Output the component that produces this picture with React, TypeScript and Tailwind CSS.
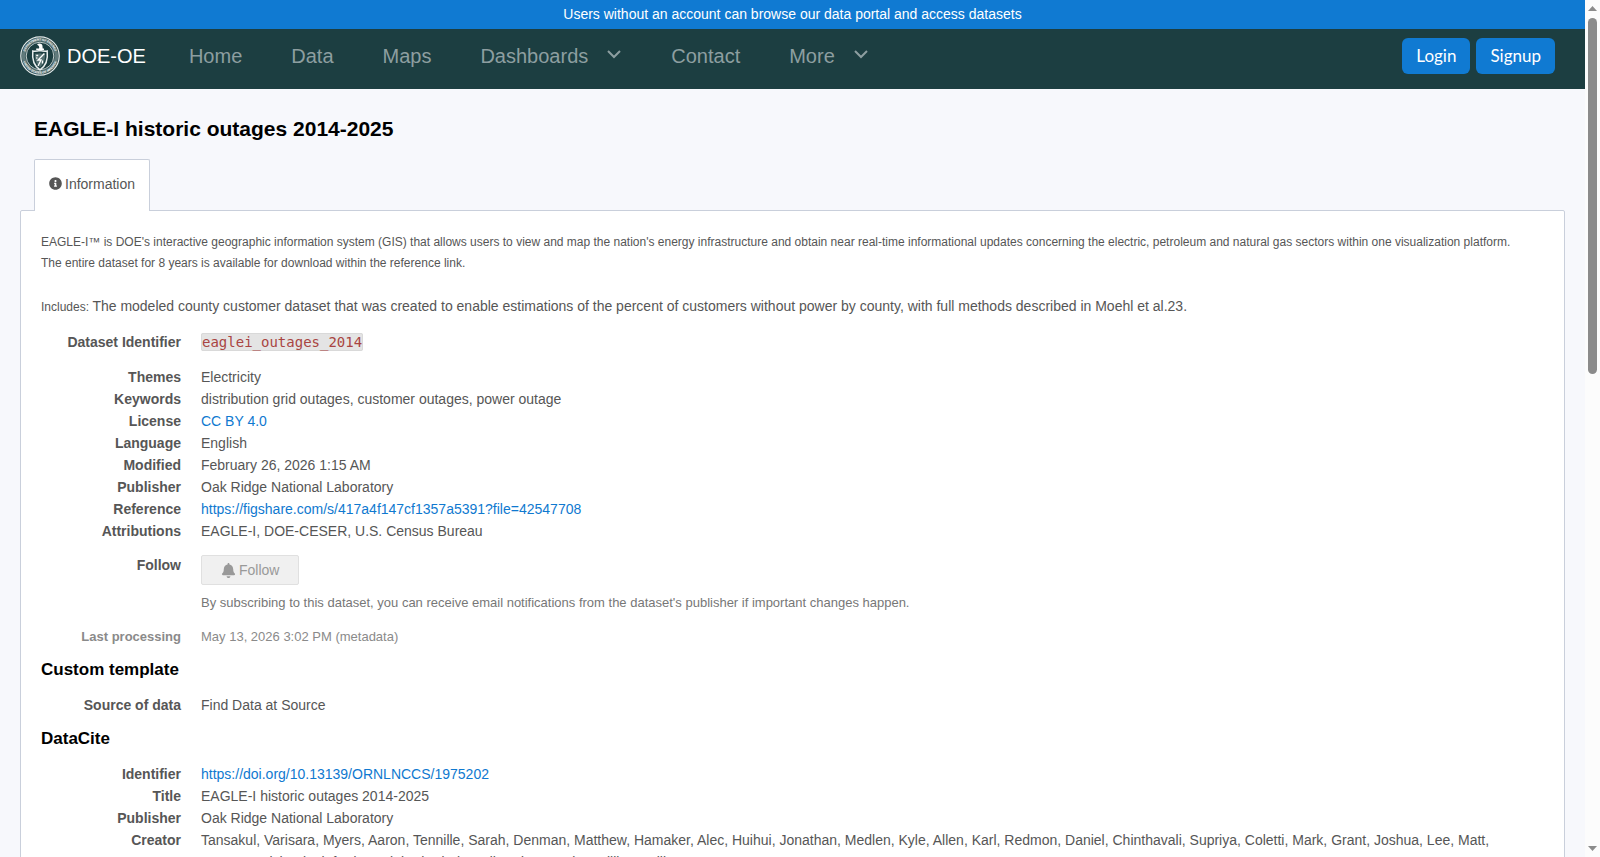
import type { ReactNode } from "react";
import { FaBell, FaInfoCircle } from "react-icons/fa";

type Row = { label: string; value: ReactNode };

const linkClass = "text-[#0f79d0] hover:underline";

const navItems = [
  { label: "Home", href: "/", menu: false },
  { label: "Data", href: "/explore", menu: false },
  { label: "Maps", href: "/maps", menu: false },
  { label: "Dashboards", href: "/dashboards", menu: true },
  { label: "Contact", href: "/contact", menu: false },
  { label: "More", href: "/more", menu: true },
];

const metadata: Row[] = [
  { label: "Themes", value: "Electricity" },
  { label: "Keywords", value: "distribution grid outages, customer outages, power outage" },
  {
    label: "License",
    value: <a className={linkClass} href="https://creativecommons.org/licenses/by/4.0/">CC BY 4.0</a>,
  },
  { label: "Language", value: "English" },
  { label: "Modified", value: "February 26, 2026 1:15 AM" },
  { label: "Publisher", value: "Oak Ridge National Laboratory" },
  {
    label: "Reference",
    value: (
      <a className={linkClass} href="https://figshare.com/s/417a4f147cf1357a5391?file=42547708">
        https://figshare.com/s/417a4f147cf1357a5391?file=42547708
      </a>
    ),
  },
  { label: "Attributions", value: "EAGLE-I, DOE-CESER, U.S. Census Bureau" },
];

const dataCite: Row[] = [
  {
    label: "Identifier",
    value: (
      <a className={linkClass} href="https://doi.org/10.13139/ORNLNCCS/1975202">
        https://doi.org/10.13139/ORNLNCCS/1975202
      </a>
    ),
  },
  { label: "Title", value: "EAGLE-I historic outages 2014-2025" },
  { label: "Publisher", value: "Oak Ridge National Laboratory" },
  {
    label: "Creator",
    value:
      "Tansakul, Varisara, Myers, Aaron, Tennille, Sarah, Denman, Matthew, Hamaker, Alec, Huihui, Jonathan, Medlen, Kyle, Allen, Karl, Redmon, Daniel, Chinthavali, Supriya, Coletti, Mark, Grant, Joshua, Lee, Matt, Maness, Michael, Lipford, Daniel, Bhaduri, Budhendra, Newby, William, Hill",
  },
];

function Seal() {
  return (
    <svg width="40" height="40" viewBox="0 0 40 40" fill="none" aria-hidden="true">
      <defs>
        <path id="seal-top" d="M4.6 20a15.4 15.4 0 0 1 30.8 0" />
        <path id="seal-bottom" d="M2.4 20a17.6 17.6 0 0 0 35.2 0" />
      </defs>
      <circle cx="20" cy="20" r="19.2" stroke="#e3e9e9" strokeWidth="1.2" />
      <circle cx="20" cy="20" r="16.4" stroke="#8fa3a4" strokeWidth="3.6" strokeOpacity=".6" />
      <circle cx="20" cy="20" r="13.8" stroke="#d5dddd" strokeWidth=".9" />
      <g fill="#fff" fontSize="3" fontWeight="700" fontFamily="Liberation Sans, sans-serif">
        <text>
          <textPath href="#seal-top" startOffset="50%" textAnchor="middle">DEPARTMENT OF ENERGY</textPath>
        </text>
        <text>
          <textPath href="#seal-bottom" startOffset="50%" textAnchor="middle">UNITED STATES OF AMERICA</textPath>
        </text>
      </g>
      {/* eagle crest */}
      <path d="M17 8.6c1.6-1.9 5.2-1.3 5.400 1l.3 3h1.300v1.400h-7.800v-1.400h2.800c.6-1.400.2-2.400-2-4z" fill="#fff" />
      {/* shield */}
      <path
        d="M12.800 15c2.600.5 4.800.1 7.200-.5 2.400.6 4.600 1 7.200.5.8 7.200-.6 14.600-7.200 18.800-6.600-4.200-8-11.600-7.200-18.800z"
        stroke="#e8eeee"
        strokeWidth="1.500"
      />
      <path d="M15 17.800c1.800.2 3.500-.1 5-.5 1.500.4 3.200.7 5 .5.3 5.200-.9 10.200-5 13.400-4.100-3.200-5.300-8.200-5-13.400z" fill="#8ea3a3" fillOpacity=".5" />
      <path d="m24.400 17.500-6.400 6.500h3l-3 6M16.200 19.500h2M16.200 22h1.200M22.500 24.500v3" stroke="#fff" strokeWidth="1.300" />
    </svg>
  );
}

function Chevron() {
  return (
    <svg className="ml-[18px]" width="16" height="16" viewBox="0 0 16 16" fill="none" stroke="currentColor" strokeWidth="2" aria-hidden="true">
      <path d="m2 3 6 6 6-6" />
    </svg>
  );
}

function DefinitionList({ rows }: { rows: Row[] }) {
  return (
    <dl className="mt-[13px] grid grid-cols-[140px_1fr] gap-x-5 leading-[22px]">
      {rows.map((row) => (
        <div key={row.label} className="contents">
          <dt className="text-right font-bold">{row.label}</dt>
          <dd>{row.value}</dd>
        </div>
      ))}
    </dl>
  );
}

function ScrollRail() {
  return (
    <div className="flex w-[15px] shrink-0 flex-col items-center justify-between bg-[#fcfcfc] py-1.5" aria-hidden="true">
      <div className="flex min-h-0 grow flex-col items-center gap-[7px]">
        <svg width="9" height="5" viewBox="0 0 9 5" fill="#8b8b8b">
          <path d="M4.5 0 9 5H0z" />
        </svg>
        <div className="h-[42.4%] w-[9px] rounded-full bg-[#8b8b8b]" />
      </div>
      <svg width="9" height="5" viewBox="0 0 9 5" fill="#8b8b8b">
        <path d="M4.5 5 9 0H0z" />
      </svg>
    </div>
  );
}

export default function App() {
  return (
    <div className="flex h-screen overflow-hidden bg-[#f7f8fc] font-['Liberation_Sans',Arial,sans-serif] text-sm text-[#565656]">
      <div className="min-w-0 grow overflow-hidden">
        <div className="bg-[#107ad2] text-center leading-[29px] text-white">
          Users without an account can browse our data portal and access datasets
        </div>

        <header className="flex h-[60px] items-center bg-[#1c3e41] pb-1.5 pl-5 pr-[30px]">
          <a href="/" className="flex items-center gap-[7px] text-xl text-white">
            <Seal />
            DOE-OE
          </a>
          <nav className="ml-[43px] flex grow items-center gap-[49px] text-xl text-[#8d9ea0]">
            {navItems.map((item) =>
              item.menu ? (
                <button key={item.label} type="button" className="flex items-center">
                  {item.label}
                  <Chevron />
                </button>
              ) : (
                <a key={item.label} href={item.href}>{item.label}</a>
              ),
            )}
          </nav>
          <div className="flex gap-1.5 font-['Lato',sans-serif] text-[17px] text-white">
            <a href="/login" className="flex h-9 items-center rounded-md bg-[#107ad2] px-3.5">Login</a>
            <a href="/signup" className="flex h-9 items-center rounded-md bg-[#107ad2] px-3.5">Signup</a>
          </div>
        </header>

        <main className="px-5 pt-6">
          <h1 className="px-3.5 text-[21px] font-bold leading-8 text-black">EAGLE-I historic outages 2014-2025</h1>

          <div role="tablist" className="mt-3.5 px-3.5">
            <button
              type="button"
              role="tab"
              aria-selected="true"
              className="relative z-10 -mb-px flex h-[52px] items-center gap-[3px] rounded-t-xs border border-b-0 border-[#c9cfdb] bg-white px-3.5 pb-1"
            >
              <FaInfoCircle size={13} />
              Information
            </button>
          </div>

          <section className="rounded-xs border border-[#c9cfdb] bg-white px-5 pb-10 pt-[21px]">
            <p className="text-xs leading-[21px]">
              EAGLE-I™ is DOE's interactive geographic information system (GIS) that allows users to view and map the
              nation's energy infrastructure and obtain near real-time informational updates concerning the electric,
              petroleum and natural gas sectors within one visualization platform.
              <br />
              The entire dataset for 8 years is available for download within the reference link.
            </p>
            <p className="mt-[21px] leading-[22px]">
              <span className="text-xs">Includes: </span>
              The modeled county customer dataset that was created to enable estimations of the percent of customers
              without power by county, with full methods described in Moehl et al.23.
            </p>

            <div className="pt-px">
              <DefinitionList
                rows={[
                  {
                    label: "Dataset Identifier",
                    value: (
                      <code className="rounded-xs border border-[#d9d9d9] bg-[#e4e4e4] font-['DejaVu_Sans_Mono',monospace] text-sm text-[#a94442]">
                        eaglei_outages_2014
                      </code>
                    ),
                  },
                ]}
              />
            </div>

            <DefinitionList rows={metadata} />

            <dl className="mt-3 grid grid-cols-[140px_1fr] gap-x-5">
              <dt className="text-right font-bold leading-[22px]">Follow</dt>
              <dd className="pt-px">
                <button
                  type="button"
                  disabled
                  className="flex h-[30px] items-center gap-[3px] rounded-xs border border-[#e0e0e0] bg-[#f0f0f0] px-[19px] text-[#999]"
                >
                  <FaBell size={15} />
                  Follow
                </button>
                <p className="mt-2 text-[13px] leading-5 text-[#777]">
                  By subscribing to this dataset, you can receive email notifications from the dataset's publisher if
                  important changes happen.
                </p>
              </dd>
            </dl>

            <dl className="mt-3.5 grid grid-cols-[140px_1fr] gap-x-5 text-[13px] leading-5 text-[#8a8a8a]">
              <dt className="text-right font-bold">Last processing</dt>
              <dd>May 13, 2026 3:02 PM (metadata)</dd>
            </dl>

            <h2 className="mt-3 text-[17px] font-bold leading-[22px] text-black">Custom template</h2>
            <DefinitionList rows={[{ label: "Source of data", value: "Find Data at Source" }]} />

            <h2 className="mt-3 text-[17px] font-bold leading-[22px] text-black">DataCite</h2>
            <DefinitionList rows={dataCite} />
          </section>
        </main>
      </div>
      <ScrollRail />
    </div>
  );
}
